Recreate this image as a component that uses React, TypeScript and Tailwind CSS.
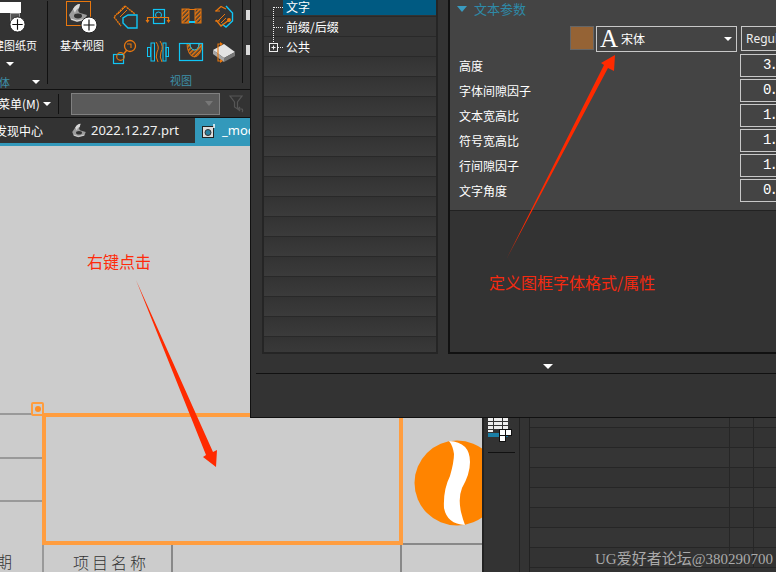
const CJK = "font-['Noto_Sans_CJK_SC','Noto_Sans',sans-serif]";

const PlusBadge = ({ className }: { className: string }) => (
  <svg viewBox="0 0 18 18" className={className}>
    <circle cx="9" cy="9" r="8" fill="#fff" stroke="#222" strokeWidth="1" />
    <path d="M9 3.5v11M3.5 9h11" stroke="#111" strokeWidth="1.2" />
  </svg>
);

const BracketIcon = ({ className }: { className: string }) => (
  <svg viewBox="0 0 20 20" className={className}>
    <path d="M1 12 L5 6 Q8 1 12 1 L11 5 Q9 8 12 10 L19 12 L17 17 L9 19 L3 17 Z" fill="#9c9c9c" />
    <path d="M5 6 Q8 1 12 1 L11 5 Q8 6 7 10 Z" fill="#d8d8d8" />
    <ellipse cx="10" cy="13" rx="4" ry="2.4" fill="#333" />
    <path d="M3 16 L9 18 L17 16" stroke="#e0e0e0" strokeWidth="1" fill="none" />
  </svg>
);

const Hatch = ({ id }: { id: string }) => (
  <pattern id={id} width="3" height="3" patternUnits="userSpaceOnUse" patternTransform="rotate(45)">
    <rect width="3" height="3" fill="#3a3a3a" />
    <rect width="1.6" height="3" fill="#e8770e" />
  </pattern>
);

const ORANGE = "#e8770e";
const CYAN = "#11c5f5";

// all drawn in page-like coordinates so they can be checked against the shot
const RibbonIcons = () => (
  <div className="grid grid-cols-4 grid-rows-2 w-[132px] h-[70px]">
    <svg viewBox="110 0 33 35" className="w-[33px] h-[35px]" fill="none">
      <path d="M125 6 L114 17 L121 26 M125 6 L135 14" stroke={ORANGE} strokeWidth="1.4" strokeDasharray="2 0.6" />
      <path d="M118 14 L125 7 M120 17 L127 10" stroke={ORANGE} strokeWidth="1" />
      <path d="M128 15 H137 V28 H128 L123 23 V18 Z" stroke={CYAN} strokeWidth="1.4" />
    </svg>
    <svg viewBox="143 0 33 35" className="w-[33px] h-[35px]" fill="none">
      <rect x="153.5" y="9.5" width="11" height="14" stroke={CYAN} strokeWidth="1.2" />
      <circle cx="158.5" cy="15" r="3" stroke={CYAN} strokeWidth="1" />
      <path d="M147 17.5 H169 M147.500 17 V22 M168.500 17 V22" stroke={ORANGE} strokeWidth="1.2" />
      <path d="M145.500 20 L147.500 23 L149.500 20 Z M166.500 20 L168.500 23 L170.500 20 Z" fill={ORANGE} />
    </svg>
    <svg viewBox="176 0 33 35" className="w-[33px] h-[35px]" fill="none">
      <defs><Hatch id="h3" /></defs>
      <rect x="182" y="9" width="7" height="14" fill="url(#h3)" stroke={ORANGE} />
      <rect x="195" y="9" width="6" height="14" fill="url(#h3)" stroke={ORANGE} />
      <path d="M189 9.500 H195" stroke={ORANGE} strokeWidth="1" />
      <rect x="189" y="21" width="6" height="2" fill={CYAN} />
    </svg>
    <svg viewBox="209 0 33 35" className="w-[33px] h-[35px]" fill="none">
      <path d="M226 6 L232.500 13 V21 L226 27 L222 24" stroke={CYAN} strokeWidth="1.4" />
      <path d="M216 11 L221 6.500 L226 9 M216 20 L221 26 L229 20" stroke={ORANGE} strokeWidth="1.3" />
      <path d="M215 11 H220 M215 21 H220 M218 21 L225 14 M221 23 L226 18" stroke={ORANGE} strokeWidth="1" />
      <circle cx="229" cy="20" r="2" fill={ORANGE} />
    </svg>
    <svg viewBox="110 35 33 35" className="w-[33px] h-[35px]" fill="none">
      <rect x="113.500" y="54.500" width="10" height="9" stroke={CYAN} strokeWidth="1.2" />
      <circle cx="120.500" cy="56.500" r="3.800" stroke={ORANGE} strokeWidth="1.200" />
      <path d="M123.500 54 L127 50" stroke={ORANGE} strokeWidth="1.500" />
      <circle cx="130" cy="46" r="5.500" stroke={ORANGE} strokeWidth="1.300" />
      <path d="M127 44 H131 V48" stroke={ORANGE} strokeWidth="1.100" />
    </svg>
    <svg viewBox="143 35 33 35" className="w-[33px] h-[35px]" fill="none">
      <rect x="147.500" y="47.500" width="3" height="9" stroke={CYAN} />
      <rect x="151" y="43" width="3.500" height="18" stroke={CYAN} />
      <rect x="163" y="43" width="3" height="18" stroke={CYAN} />
      <rect x="166" y="47.500" width="2.500" height="9" stroke={CYAN} />
      <path d="M156 42 Q160 47 157 52 Q155 57 158 62 M160 41 Q164 47 161 52 Q159 57 162 62" stroke={ORANGE} strokeWidth="1" />
    </svg>
    <svg viewBox="176 35 33 35" className="w-[33px] h-[35px]" fill="none">
      <defs><Hatch id="h7" /></defs>
      <path d="M187 44 A7.500 13 0 0 0 202 44 H199 A4.500 6 0 0 1 190 44 Z" fill="url(#h7)" stroke={ORANGE} strokeWidth="0.800" />
      <rect x="179.500" y="43.500" width="23" height="17" stroke={CYAN} strokeWidth="1.200" />
      <path d="M190 44 A4.500 6 0 0 0 199 44" stroke={CYAN} strokeWidth="1" />
    </svg>
    <svg viewBox="209 35 33 35" className="w-[33px] h-[35px]" fill="none">
      <path d="M213 50 L224 44 L235 52 L224 58 Z" fill="#e4e4e4" />
      <path d="M213 50 V54 L224 62 V58 Z" fill="#a8a8a8" />
      <path d="M224 58 V62 L235 56 V52 Z" fill="#777" />
      <path d="M222 44 H218 V61 H222" stroke={ORANGE} strokeWidth="1.100" />
      <path d="M220 42 L223 44 L220 46 Z M220 59 L223 61 L220 63 Z" fill={ORANGE} />
    </svg>
  </div>
);

const CadRibbon = () => (
  <div className={`flex h-[90px] shrink-0 bg-[#333] border-b border-[#111] text-white text-[11px] ${CJK}`}>
    <div className="w-[47px] shrink-0 flex flex-col overflow-hidden">
      <div className="relative h-[36px] shrink-0">
        <div className="w-[21px] h-[11px] mt-[2px] bg-white" />
        <div className="w-[10px] h-[8px] ml-[10px] border border-[#999] bg-[#555]" />
        <PlusBadge className="absolute left-[9px] top-[16px] w-[17px] h-[17px]" />
      </div>
      <div className="whitespace-nowrap -ml-[7px] leading-[18px]">建图纸页</div>
      <div className="ml-[6px] mt-[8px] w-0 h-0 border-x-[4px] border-x-transparent border-t-[4px] border-t-white" />
      <div className="mt-[8px] flex items-center justify-between pr-[7px] text-[#3d8fa8] leading-[16px]">
        <span className="-ml-[1px]">体</span>
        <span className="w-0 h-0 border-x-[4px] border-x-transparent border-t-[4px] border-t-white" />
      </div>
    </div>
    <div className="w-px h-[83px] mt-[1px] bg-[#111] shrink-0" />
    <div className="w-[62px] shrink-0 flex flex-col items-start pl-[12px]">
      <div className="relative w-[25px] h-[25px] mt-[1px] ml-[6px] border border-[#e8770e]">
        <BracketIcon className="absolute left-[1px] top-[1px] w-[20px] h-[20px]" />
        <PlusBadge className="absolute left-[13px] top-[14px] w-[18px] h-[18px]" />
      </div>
      <div className="mt-[10px] whitespace-nowrap leading-[18px]">基本视图</div>
    </div>
    <div className="flex flex-col items-center">
      <RibbonIcons />
      <div className="ml-[10px] text-[#3d8fa8] leading-[18px] mt-[1px]">视图</div>
    </div>
    <div className="w-px h-[83px] bg-[#111]" />
    <div className="ml-[3px] w-[4px] flex flex-col">
      <div className="h-[10px] mt-[10px] bg-[#d8d8d8]" />
      <div className="h-[10px] mt-[25px] bg-[#d8d8d8]" />
    </div>
  </div>
);

const MenuRow = () => (
  <div className={`flex items-center h-[28px] shrink-0 bg-[#333] border-b border-[#111] text-white text-[12px] ${CJK}`}>
    <span className="-ml-[2px] w-[44px] whitespace-nowrap">菜单(M)</span>
    <span className="ml-[1px] w-0 h-0 border-x-[4px] border-x-transparent border-t-[4px] border-t-white" />
    <span className="ml-[7px] w-px h-[20px] bg-[#111]" />
    <div className="ml-[12px] w-[149px] h-[22px] flex items-center justify-end pr-[6px] bg-[#5a5a5a] border border-[#808080]">
      <span className="w-0 h-0 border-x-[4px] border-x-transparent border-t-[5px] border-t-[#777]" />
    </div>
    <svg viewBox="0 0 16 18" className="ml-[9px] w-[16px] h-[18px]" fill="none" stroke="#565656" strokeWidth="1.200">
      <path d="M1 1 H13 L8.500 7 V14 L5.500 12 V7 Z" />
      <path d="M9 14 L11 12 M9 14 L11 16 M9 14 H13 A2 2 0 0 1 13 17" />
    </svg>
  </div>
);

const TabRow = () => (
  <div className={`flex h-[25px] shrink-0 bg-[#333] text-white ${CJK}`}>
    <span className="-ml-[5px] w-[76px] text-[12px] leading-[25px] whitespace-nowrap">发现中心</span>
    <div className="flex items-center">
      <BracketIcon className="w-[16px] h-[15px]" />
      <span className="ml-[4px] w-[104px] text-[13px] text-[#f0f0f0] font-['Noto_Sans',sans-serif]">2022.12.27.prt</span>
    </div>
    <div className="flex items-center w-[55px] bg-[#3399bb] overflow-hidden">
      <svg viewBox="0 0 14 15" className="ml-[7px] w-[14px] h-[15px] shrink-0">
        <rect x="0.500" y="3.500" width="11" height="11" fill="#ddd" stroke="#222" />
        <circle cx="6" cy="9.500" r="3" fill="#2a7f9f" stroke="#333" />
        <path d="M12 1 V5" stroke="#fff" strokeWidth="1.500" />
      </svg>
      <span className="ml-[6px] text-[13px] whitespace-nowrap font-['Noto_Sans',sans-serif]">_mod</span>
    </div>
  </div>
);

const Drawing = () => (
  <div className="w-[482px] shrink-0 flex flex-col justify-end">
    <div className="flex h-[132px] shrink-0">
      <div className="relative w-[42px] shrink-0 flex flex-col pr-[10px]">
        <div className="h-[44px] border-t-2 border-[#999]" />
        <div className="h-[43px] -mr-[10px] border-t-2 border-[#999]" />
        <div className="h-[43px] -mr-[10px] border-t-2 border-[#999]" />
        <div className="absolute left-[31px] -top-[11px] w-[13px] h-[14px] flex items-center justify-center rounded-[2px] border-2 border-[#ff9d3f]">
          <span className="w-[6px] h-[6px] rounded-full bg-[#ff8f26]" />
        </div>
      </div>
      <div className="w-[361px] shrink-0 border-4 border-[#ff9d3f]" />
      <div className="flex-1 border-b-2 border-[#888] overflow-hidden pt-[27px] pl-[11px]">
        <svg viewBox="0 0 86 86" className="w-[86px] h-[86px]">
          <circle cx="43" cy="43" r="42.500" fill="#ff8400" />
          <path d="M35 1 Q56 2 56 22 Q56 34 48 48 Q44 58 47 72 Q49 80 51 85 Q33 84 30 68 Q29 50 36 36 Q40 22 40 14 Q39 6 35 1 Z" fill="#fff" />
        </svg>
      </div>
    </div>
    <div className="flex h-[27px] shrink-0 text-[#333] font-light text-[16px] font-['Noto_Sans_CJK_SC',sans-serif] overflow-hidden">
      <div className="w-[44px] shrink-0 border-r-2 border-[#999] overflow-hidden">
        <span className="block -ml-[4px] leading-[32px]">期</span>
      </div>
      <div className="w-[129px] shrink-0 border-r-2 border-[#888] pl-[29px] tracking-[3px] leading-[34px] whitespace-nowrap">项目名称</div>
      <div className="w-[229px] shrink-0 border-r-2 border-[#888]" />
    </div>
  </div>
);

const gridRows = Array.from({ length: 8 }, (_, i) => i);

const SidePanel = () => (
  <div className="flex-1 flex border-l-2 border-[#222] bg-[#333] min-w-0">
    <div className="w-[35px] shrink-0 flex flex-col justify-end">
      <div className="h-[154px] px-[4px]">
        <svg viewBox="0 0 24 24" className="w-[24px] h-[24px]">
          <g fill="#eee">
            <rect x="0" y="0" width="5" height="3" /><rect x="6" y="0" width="8" height="3" /><rect x="15" y="0" width="5" height="3" />
            <rect x="0" y="4" width="5" height="3" /><rect x="6" y="4" width="8" height="3" /><rect x="15" y="4" width="5" height="3" />
            <rect x="0" y="8" width="5" height="3" /><rect x="6" y="8" width="8" height="3" /><rect x="15" y="8" width="5" height="3" />
            <rect x="0" y="12" width="5" height="2" />
          </g>
          <rect x="0" y="15" width="20" height="4" fill="#1b7fa6" />
          <g fill="#fff" stroke="#111">
            <rect x="11.500" y="11.500" width="6" height="6" />
            <rect x="17.500" y="11.500" width="6" height="6" />
            <rect x="11.500" y="17.500" width="6" height="6" />
          </g>
        </svg>
        <div className="mt-[10px] h-px w-[27px] bg-[#111]" />
      </div>
    </div>
    <div className="w-[11px] shrink-0 border-x border-[#222]" />
    <div className="flex-1 flex flex-col justify-end min-w-0">
      {gridRows.map((i) => (
        <div key={i} className={`h-[20px] shrink-0 flex border-b border-[#262626] ${i % 2 ? "bg-[#333]" : "bg-[#353535]"}`}>
          <div className="w-[200px] shrink-0 border-r border-[#262626]" />
          <div className="w-[24px] shrink-0 border-r border-[#262626]" />
        </div>
      ))}
      <div className="h-[4px] shrink-0" />
    </div>
  </div>
);

const treeRows = ["文字", "前缀/后缀", "公共"];
const blankRows = Array.from({ length: 15 }, (_, i) => i);

const TreePanel = () => (
  <div className="relative w-[176px] h-[354px] shrink-0 ml-[11px] flex flex-col border-2 border-t-0 border-[#252525] overflow-hidden text-[12px] text-white">
    <div className="h-[17px] shrink-0 pl-[19px] pb-[1px] border-b border-[#292929]">
      <div className="h-[15px] bg-[#005a82] pl-[3px] leading-[14px]">{treeRows[0]}</div>
    </div>
    {treeRows.slice(1).map((t) => (
      <div key={t} className="h-[20px] shrink-0 pl-[22px] leading-[20px] border-b border-[#292929] bg-[#353535]">
        {t}
      </div>
    ))}
    {blankRows.map((i) => (
      <div key={i} className="h-[20px] shrink-0 border-b border-[#292929] bg-gradient-to-b from-[#333] to-[#3b3b3b]" />
    ))}
    <svg viewBox="0 0 24 56" className="absolute left-0 top-0 w-[24px] h-[56px]" fill="none">
      <path d="M9.500 7 V44 M10 7.500 H19 M10 27.500 H19 M14 47.500 H19" stroke="#eee" strokeDasharray="1 1" />
      <rect x="5.500" y="43.500" width="8" height="8" stroke="#eee" fill="#353535" />
      <path d="M7.500 47.500 H11.500 M9.500 45.500 V49.500" stroke="#eee" />
    </svg>
  </div>
);

const paramRows = [
  ["高度", "3."],
  ["字体间隙因子", "0."],
  ["文本宽高比", "1."],
  ["符号宽高比", "1."],
  ["行间隙因子", "1."],
  ["文字角度", "0."],
];

const ParamPanel = () => (
  <div className="flex-1 h-[354px] ml-[10px] flex flex-col border-l-2 border-b-2 border-[#111] overflow-hidden text-white text-[12px]">
    <div className="h-[211px] shrink-0 bg-[#444] border-b border-[#222]">
      <div className="flex items-center h-[18px] pl-[7px]">
        <span className="w-0 h-0 border-x-[5px] border-x-transparent border-t-[6px] border-t-[#3a9bc0]" />
        <span className="ml-[7px] text-[13px] text-[#2e8aa8]">文本参数</span>
      </div>
      <div className="flex items-start h-[33px] pt-[8px] pl-[120px]">
        <div className="w-[24px] h-[24px] shrink-0 bg-[#956335] border border-[#666]" />
        <div className="ml-[2px] w-[141px] h-[26px] shrink-0 flex items-center border border-[#c8c8c8]">
          <span className="ml-[3px] w-[20px] text-[25px] leading-[24px] font-['Liberation_Serif',serif]">A</span>
          <span className="ml-[1px] flex-1">宋体</span>
          <span className="mr-[4px] w-0 h-0 border-x-[4px] border-x-transparent border-t-[4px] border-t-white" />
        </div>
        <div className="ml-[4px] h-[25px] flex-1 -mr-[4px] pl-[4px] leading-[23px] border border-[#c8c8c8] font-['Noto_Sans',sans-serif] text-[#eee] whitespace-nowrap">Regular</div>
      </div>
      <div className="flex flex-col gap-[2px] pt-[3px]">
        {paramRows.map(([label, value]) => (
          <div key={label} className="flex items-center h-[23px]">
            <span className="w-[290px] pl-[9px] shrink-0">{label}</span>
            <div className="flex-1 -mr-[4px] h-[23px] border border-[#c8c8c8] pl-[22px] text-[14px] leading-[21px] tracking-[-2px] font-['Liberation_Mono',monospace]">{value}</div>
          </div>
        ))}
      </div>
    </div>
    <div className="flex-1 bg-[#333]" />
  </div>
);

const Dialog = () => (
  <div className={`absolute left-[250px] top-0 w-[526px] h-[418px] flex flex-col bg-[#333] border-l border-b border-[#111] ${CJK}`}>
    <div className="flex h-[354px] shrink-0">
      <TreePanel />
      <ParamPanel />
    </div>
    <div className="h-[19px] shrink-0 flex justify-center items-center">
      <span className="ml-[68px] mt-[6px] w-0 h-0 border-x-[5px] border-x-transparent border-t-[5px] border-t-white" />
    </div>
    <div className="ml-[5px] h-px bg-[#111]" />
  </div>
);

export default function App() {
  return (
    <div className={`relative w-[776px] h-[572px] overflow-hidden flex flex-col bg-[#ccc] ${CJK}`}>
      <CadRibbon />
      <MenuRow />
      <TabRow />
      <div className="h-[3px] shrink-0 bg-[#3399bb]" />
      <div className="flex-1 flex min-h-0">
        <Drawing />
        <SidePanel />
      </div>

      <Dialog />

      {/* annotations dropped over the screenshot */}
      <span className="absolute left-[87px] top-[249px] text-[16px] leading-[24px] text-[#ff2a0a]">右键点击</span>
      <span className="absolute left-[489px] top-[270px] text-[16px] leading-[24px] text-[#f52a10] whitespace-nowrap">定义图框字体格式/属性</span>
      <svg viewBox="0 0 776 572" className="absolute inset-0 w-[776px] h-[572px] pointer-events-none">
        <polygon points="136,280 213,452 217,450 216,467 203,457 206,455" fill="#ff2a00" />
        <polygon points="507,258 608,68 614,71 615,55 601,63 604,65" fill="#ff2a00" />
      </svg>
      <span className="absolute left-[595px] top-[549px] text-[15px] leading-[20px] text-[#aaa] whitespace-nowrap font-['Liberation_Serif','Noto_Sans_CJK_SC',serif]">UG爱好者论坛@380290700</span>
    </div>
  );
}
